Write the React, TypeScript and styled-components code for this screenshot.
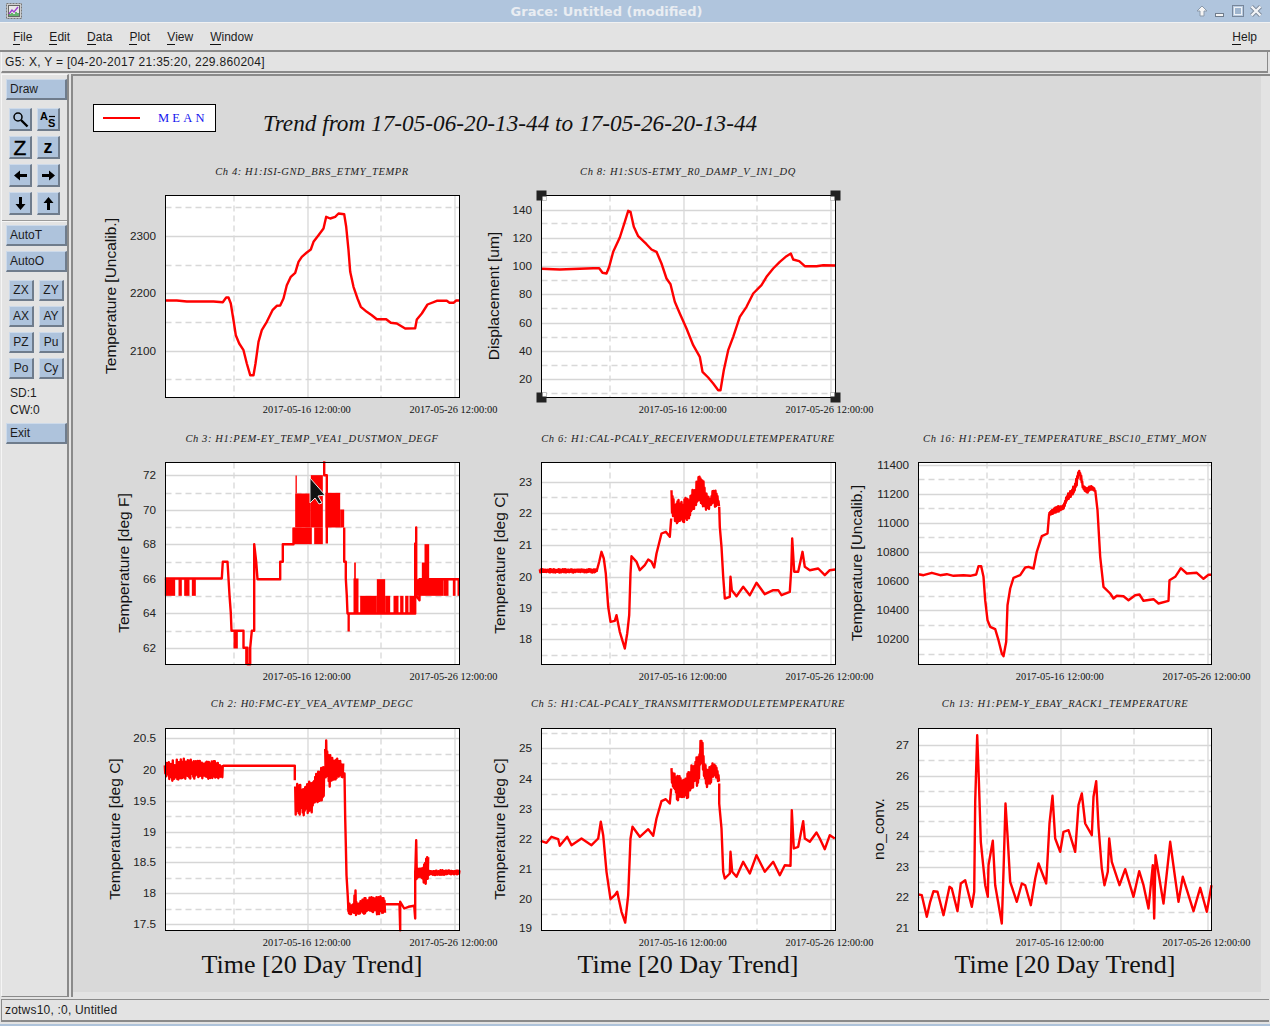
import React from 'react'
import styled, { createGlobalStyle } from 'styled-components'

const GlobalStyle = createGlobalStyle`
  html, body {
    margin: 0;
    padding: 0;
    background: #e3e3e3;
  }
`

// zoom coords = crop pixels * 3, that's how the traces were read off
type Pt = [number, number]

const parse = (s: string): Pt[] =>
  s
    .trim()
    .split(/\s+/)
    .map((p) => {
      const [x, y] = p.split(',')
      return [Number(x), Number(y)] as Pt
    })

const lerp = (pts: Pt[], x: number) => {
  if (x <= pts[0][0]) return pts[0][1]
  for (let i = 1; i < pts.length; i++) {
    if (x <= pts[i][0]) {
      const t = (x - pts[i - 1][0]) / (pts[i][0] - pts[i - 1][0])
      return pts[i - 1][1] + t * (pts[i][1] - pts[i - 1][1])
    }
  }
  return pts[pts.length - 1][1]
}

// noisy stretch: zigzag between an upper and a lower outline
const band = (upper: string, lower: string, seed = 7): Pt[] => {
  const up = parse(upper)
  const lo = parse(lower)
  const start = Math.min(up[0][0], lo[0][0])
  const end = Math.max(up[up.length - 1][0], lo[lo.length - 1][0])
  const out: Pt[] = []
  let r = seed
  let odd = false
  for (let x = start; x <= end; x += 1.5) {
    r = (r * 137 + 61) % 509
    const k = (r / 509) * 0.3
    const a = lerp(up, x)
    const b = lerp(lo, x)
    out.push([x, odd ? b - (b - a) * k : a + (b - a) * k])
    odd = !odd
  }
  return out
}

type GraphProps = {
  left: number
  top: number
  width?: number
  major: [number, string][]
  minor: number[]
  yLabel: string
  yLabelX: number
  lines: Pt[][]
  rects?: number[][]
  handles?: boolean
  cursor?: boolean
}

const graphs: Record<string, GraphProps> = {
  ch4: {
    left: 196,
    top: 106,
    major: [
      [229, '2300'],
      [400, '2200'],
      [574, '2100'],
    ],
    minor: [142, 316, 487, 658],
    yLabel: 'Temperature [Uncalib.]',
    yLabelX: -54,
    lines: [
      parse(
        '196,421 230,421 260,424 300,424 340,424 368,426 378,412 385,412 392,430 400,480 407,525 417,550 430,570 440,610 450,645 460,645 466,610 475,545 485,510 500,485 517,450 530,437 540,436 550,415 560,375 572,350 585,338 595,305 605,290 620,277 632,268 640,245 655,225 670,205 678,170 690,175 705,170 715,160 732,162 738,200 745,270 750,335 760,380 772,415 782,440 800,455 815,465 830,477 858,477 872,488 890,490 915,505 945,504 950,478 965,460 982,433 1010,422 1040,422 1048,428 1060,428 1068,421 1078,421'
      ),
    ],
  },
  ch8: {
    left: 185,
    top: 106,
    major: [
      [150, '140'],
      [236, '120'],
      [320, '100'],
      [404, '80'],
      [490, '60'],
      [574, '40'],
      [658, '20'],
    ],
    minor: [190, 278, 362, 446, 532, 616, 700],
    yLabel: 'Displacement [um]',
    yLabelX: -47,
    handles: true,
    lines: [
      parse(
        '185,326 220,327 240,328 300,326 340,324 358,324 368,338 380,340 388,320 400,275 420,232 435,185 445,152 452,155 462,200 475,228 500,252 515,268 530,275 545,310 560,355 572,372 585,425 600,460 620,505 640,555 660,590 668,635 685,652 700,670 715,690 722,690 732,630 745,570 760,530 780,470 800,440 820,400 845,375 860,350 880,325 900,305 920,288 933,280 940,298 958,303 975,318 1010,318 1030,315 1066,316'
      ),
    ],
  },
  ch3: {
    left: 196,
    top: 97,
    major: [
      [136, '72'],
      [241, '70'],
      [343, '68'],
      [447, '66'],
      [550, '64'],
      [655, '62'],
    ],
    minor: [190, 292, 397, 500, 604],
    yLabel: 'Temperature [deg F]',
    yLabelX: -41,
    cursor: true,
    lines: [
      parse(
        '194,445 365,445 368,395 382,395 385,445 388,495 392,548 394,602 430,602 430,653 442,653 442,702 450,702 450,653 455,602 462,602 462,342 468,395 472,447 540,447 540,395 548,395 548,342 580,342 580,292'
      ),
      parse('672,93 672,135 680,135 680,340'),
      parse(
        '732,292 732,395 737,395 737,445 740,497 742,550 945,550 945,340 948,340 948,292 948,497 958,510 958,447 1078,447'
      ),
    ],
    rects: [
      [194, 447, 225, 497],
      [235, 447, 245, 497],
      [252, 447, 268, 497],
      [275, 447, 287, 497],
      [400, 602, 413, 655],
      [435, 653, 443, 703],
      [580, 292, 635, 342],
      [585, 190, 632, 292],
      [586, 136, 590, 190],
      [632, 135, 668, 292],
      [642, 292, 668, 342],
      [676, 188, 720, 292],
      [720, 238, 732, 292],
      [742, 550, 749, 604],
      [760, 445, 775, 550],
      [762, 397, 767, 550],
      [780, 497, 830, 550],
      [830, 447, 855, 550],
      [855, 497, 870, 550],
      [880, 497, 895, 550],
      [900, 497, 910, 550],
      [915, 497, 925, 550],
      [928, 497, 946, 550],
      [950, 447, 1030, 497],
      [965, 397, 975, 447],
      [973, 342, 987, 447],
      [1030, 447, 1045, 497],
      [1058, 447, 1066, 497],
      [1072, 447, 1078, 497],
    ],
  },
  ch6: {
    left: 185,
    top: 97,
    major: [
      [157, '23'],
      [250, '22'],
      [347, '21'],
      [441, '20'],
      [536, '19'],
      [628, '18'],
    ],
    minor: [203, 298, 393, 487, 582, 676],
    yLabel: 'Temperature [deg C]',
    yLabelX: -41,
    lines: [
      band('180,417 350,417', '180,427 350,427', 11),
      parse(
        '350,425 358,395 365,365 372,385 378,430 385,530 392,575 405,572 410,555 420,605 435,655 442,610 448,555 452,430 455,378 470,395 480,420 495,405 505,388 515,395 523,412 530,370 545,310 558,305 570,320 574,265'
      ),
      band(
        '575,180 585,220 595,205 610,210 625,195 640,165 650,150 660,125 668,120 675,180 690,200 700,170 710,185 718,220',
        '575,260 590,280 610,282 625,282 635,250 650,240 660,215 675,245 690,235 700,230 718,230'
      ),
      parse(
        '718,230 720,290 725,350 730,440 735,505 750,500 752,440 756,480 770,498 790,470 810,495 830,458 855,492 880,480 895,480 905,495 930,485 934,420 937,325 943,425 955,425 968,365 975,410 990,420 1015,415 1035,435 1050,420 1066,418'
      ),
    ],
  },
  ch16: {
    left: 205,
    top: 97,
    width: 293,
    major: [
      [105, '11400'],
      [193, '11200'],
      [280, '11000'],
      [367, '10800'],
      [455, '10600'],
      [542, '10400'],
      [628, '10200'],
    ],
    minor: [149, 236, 323, 410, 499, 586, 673],
    yLabel: 'Temperature [Uncalib.]',
    yLabelX: -61,
    lines: [
      parse(
        '205,432 220,435 245,428 270,435 290,432 310,437 340,435 360,437 378,433 385,408 393,408 400,440 405,510 412,570 420,590 435,597 445,630 455,670 460,678 468,635 472,525 480,475 490,443 510,435 525,412 535,410 550,415 560,365 575,318 592,310 597,250'
      ),
      band(
        '597,245 620,228 640,225 650,195 672,165 680,140 686,118 692,130 698,165 710,175 722,165 735,178',
        '597,255 620,248 640,238 650,215 672,190 680,165 686,130 692,150 698,175 710,190 722,178 735,182',
        23
      ),
      parse(
        '735,180 742,240 750,380 760,470 780,490 790,505 800,497 820,498 835,510 855,495 868,493 880,512 910,507 925,520 955,512 958,450 975,440 985,425 992,414 1010,430 1040,428 1060,446 1075,434 1084,434'
      ),
    ],
  },
  ch2: {
    left: 196,
    top: 100,
    major: [
      [131, '20.5'],
      [226, '20'],
      [318, '19.5'],
      [412, '19'],
      [503, '18.5'],
      [595, '18'],
      [688, '17.5'],
    ],
    minor: [179, 271, 364, 457, 549, 643],
    yLabel: 'Temperature [deg C]',
    yLabelX: -50,
    lines: [
      band(
        '194,205 205,195 250,190 300,195 340,195 368,208',
        '194,245 215,258 250,252 300,250 340,252 368,254',
        5
      ),
      parse('368,212 584,212 584,255'),
      band(
        '585,255 610,275 640,240 660,212 672,210',
        '585,392 590,360 630,362 650,322 668,322',
        31
      ),
      band(
        '675,135 680,135 690,180 705,190 715,185 730,205',
        '675,260 690,276 700,255 730,250',
        17
      ),
      parse('730,235 733,235 735,370 737,445 739,540 743,605 745,650'),
      band(
        '745,625 762,620 765,555 768,620 800,605 830,605 855,600',
        '745,655 760,664 790,658 850,658 855,655',
        43
      ),
      parse('855,627 898,627 900,705 900,620 912,640 925,635 942,632 945,670 945,540 948,435 950,540'),
      band(
        '945,515 965,520 975,490 985,475',
        '945,555 965,548 975,578 985,545',
        3
      ),
      band('985,525 1078,525', '985,540 1078,538', 19),
    ],
  },
  ch5: {
    left: 185,
    top: 100,
    major: [
      [161, '25'],
      [253, '24'],
      [343, '23'],
      [433, '22'],
      [523, '21'],
      [613, '20'],
    ],
    minor: [115, 205, 298, 388, 478, 568, 658],
    yLabel: 'Temperature [deg C]',
    yLabelX: -41,
    lines: [
      parse(
        '183,437 200,443 215,425 235,432 240,452 262,425 275,450 305,430 335,450 355,430 363,380 370,420 380,530 392,612 405,600 412,590 425,650 436,682 445,600 452,430 458,395 480,425 505,402 520,422 530,370 545,318 558,312 570,325 574,280'
      ),
      band(
        '575,205 590,240 610,245 625,230 640,200 655,180 662,135 667,130 672,190 685,220 697,195 710,210 718,245',
        '575,280 595,320 625,315 635,280 655,270 665,205 680,285 700,250 718,265',
        13
      ),
      parse(
        '718,265 718,325 725,400 730,530 735,550 750,535 752,470 757,530 770,545 790,500 810,535 830,480 855,530 880,500 900,540 915,510 932,512 936,345 942,460 955,455 970,378 975,430 990,440 1010,412 1020,430 1035,462 1050,420 1065,430'
      ),
    ],
  },
  ch13: {
    left: 175,
    top: 100,
    width: 293,
    major: [
      [152, '27'],
      [244, '26'],
      [335, '25'],
      [425, '24'],
      [517, '23'],
      [608, '22'],
    ],
    minor: [196, 290, 380, 470, 562, 652],
    yLabel: 'no_conv.',
    yLabelX: -39,
    lines: [
      parse(
        '175,598 185,600 200,665 210,620 220,588 232,590 250,660 268,575 275,580 292,648 302,565 315,555 335,635 342,590 345,320 351,120 356,250 362,440 375,570 383,605 385,510 398,437 405,570 425,685 430,530 436,325 442,420 450,560 470,620 485,565 495,570 512,630 525,550 535,505 558,565 568,385 577,302 585,430 600,470 610,410 625,405 645,470 655,330 665,295 675,385 695,420 700,305 708,258 715,395 725,520 733,570 743,530 747,430 755,500 778,570 795,522 820,605 837,528 850,570 865,640 878,510 882,670 886,480 910,625 930,440 945,550 955,620 968,545 1000,648 1020,578 1040,650 1054,570'
      ),
    ],
  },
}

// tick labels that sit on the bottom edge of the axis
const extraTick: Record<string, [number, string]> = {
  ch5: [701, '19'],
  ch13: [699, '21'],
}

const PLOT_H = 202
const GRID_X = [68.5, 142.5, 215.5, 289.5]

const Window = styled.div`
  width: 1270px;
  height: 1026px;
  box-sizing: border-box;
  display: flex;
  flex-direction: column;
  background: #e3e3e3;
  border-bottom: 2px solid #aec3da;
  overflow: hidden;
  font-family: 'Liberation Sans', Arial, sans-serif;
  color: #1c1c1c;
`

const TitleBar = styled.div`
  height: 22px;
  flex: none;
  display: flex;
  align-items: center;
  padding: 0 7px 0 6px;
  background: #b0c5dd;
  border-bottom: 1px solid #f2f2f2;
`

const TitleText = styled.div`
  flex: 1;
  text-align: center;
  padding-right: 4px;
  color: #e9edf2;
  font: bold 13px 'DejaVu Sans', sans-serif;
`

const WinButtons = styled.div`
  display: flex;
  gap: 4px;
`

const MenuBar = styled.div`
  height: 25px;
  flex: none;
  display: flex;
  align-items: center;
  padding: 2px 13px 0;
  gap: 17px;
  font-size: 12px;
  border-bottom: 2px solid #8a8a8a;
`

const MenuItem = styled.span<{ $end?: boolean }>`
  margin-left: ${(p) => (p.$end ? 'auto' : '0')};
`

const Mnemonic = styled.span`
  display: inline-block;
  line-height: 14px;
  border-bottom: 1px solid #111;
`

const CoordBar = styled.div`
  height: 18px;
  flex: none;
  margin: 0 2px 0 1px;
  padding: 1px 0 0 3px;
  display: flex;
  align-items: center;
  font-size: 12px;
  letter-spacing: 0.3px;
  border-left: 1px solid #f5f5f5;
  border-right: 1px solid #8a8a8a;
  border-bottom: 2px solid #8a8a8a;
`

const Main = styled.div`
  flex: 1;
  min-height: 0;
  display: flex;
  margin-top: 1px;
`

const Sidebar = styled.div`
  width: 68px;
  flex: none;
  margin-left: 1px;
  box-sizing: border-box;
  padding: 4px 2px 0 4px;
  border-top: 1px solid #f5f5f5;
  border-left: 1px solid #f5f5f5;
  border-right: 2px solid #8a8a8a;
  border-bottom: 1px solid #8a8a8a;
  display: flex;
  flex-direction: column;
  font-size: 12px;
`

const bevel = `
  box-sizing: border-box;
  display: flex;
  align-items: center;
  background: #aec3dc;
  color: #1c1c1c;
  border-top: 1px solid #cddaea;
  border-left: 1px solid #cddaea;
  border-bottom: 2px solid #6f7c8c;
  border-right: 2px solid #6f7c8c;
`

const WideButton = styled.div<{ $top: number }>`
  ${bevel}
  width: 61px;
  height: 21px;
  padding-left: 3px;
  margin-top: ${(p) => p.$top}px;
`

const IconGrid = styled.div`
  display: grid;
  grid-template-columns: 23px 23px;
  grid-auto-rows: 23px;
  gap: 5px;
  margin: 8px 0 0 3px;
`

const IconButton = styled.div`
  ${bevel}
  justify-content: center;
  color: #000;
`

const BigZ = styled.span`
  font-size: 21px;
  line-height: 21px;
  -webkit-text-stroke: 0.4px #000;
`

const SmallZ = styled.span`
  font-size: 18px;
  line-height: 18px;
  font-weight: bold;
`

const TextGrid = styled.div`
  display: grid;
  grid-template-columns: 25px 25px;
  grid-auto-rows: 21px;
  gap: 5px;
  margin: 8px 0 0 3px;
`

const TextButton = styled.div`
  ${bevel}
  justify-content: center;
`

const Separator = styled.div`
  height: 1px;
  margin: 5px -2px 0 -4px;
  background: #9b9b9b;
  border-bottom: 1px solid #f5f5f5;
`

const StatText = styled.div<{ $top: number }>`
  height: 17px;
  line-height: 17px;
  margin: ${(p) => p.$top}px 0 0 4px;
`

const CanvasWrap = styled.div`
  flex: 1;
  min-width: 0;
  margin-left: 2px;
  border-top: 2px solid #8a8a8a;
  border-left: 2px solid #8a8a8a;
  padding: 0 9px 5px 0;
  display: flex;
`

const Canvas = styled.div`
  flex: 1;
  background: #d9d9d9;
  padding: 28px 0 0 20px;
`

const CanvasHead = styled.div`
  height: 57px;
  display: flex;
  align-items: flex-start;
`

const Legend = styled.div`
  width: 123px;
  height: 28px;
  box-sizing: border-box;
  background: #fff;
  border: 1px solid #000;
  display: flex;
  align-items: center;
  padding-left: 9px;
`

const LegendLine = styled.div`
  width: 37px;
  height: 2px;
  background: #f00;
`

const LegendText = styled.span`
  margin-left: 18px;
  color: #1414ee;
  font: 12.5px 'Liberation Serif', serif;
  letter-spacing: 3.2px;
`

const MainTitle = styled.div`
  margin: 6px 0 0 47px;
  font: italic 23.25px 'Liberation Serif', serif;
  color: #111;
  white-space: nowrap;
`

const GraphGrid = styled.div`
  display: grid;
  grid-template-columns: 376px 377px 376px;
  grid-template-rows: 267px 266px auto;
`

const GraphCell = styled.div`
  display: flex;
  flex-direction: column;
`

const GraphTitle = styled.div<{ $lift?: boolean }>`
  height: 34px;
  width: 294px;
  margin-left: 72px;
  display: flex;
  justify-content: center;
  padding-top: ${(p) => (p.$lift ? 3 : 4)}px;
  box-sizing: border-box;
  font: italic 10.5px/13px 'Liberation Serif', serif;
  letter-spacing: 0.6px;
  color: #222;
  white-space: nowrap;
`

const PlotSvg = styled.svg`
  display: block;
  overflow: visible;
`

const YTick = styled.text`
  font: 11.7px 'Liberation Sans', sans-serif;
  fill: #222;
  text-anchor: end;
`

const XTick = styled.text`
  font: 10.4px 'Liberation Serif', serif;
  fill: #111;
  text-anchor: middle;
`

const YLabel = styled.text`
  font: 15.5px 'Liberation Sans', sans-serif;
  fill: #111;
  text-anchor: middle;
`

const XAxisTitle = styled.div`
  width: 294px;
  margin-left: 72px;
  display: flex;
  justify-content: center;
  font: 26px/30px 'Liberation Serif', serif;
  color: #111;
  white-space: nowrap;
`

const StatusBar = styled.div`
  height: 20px;
  flex: none;
  margin: 2px 1px 2px 1px;
  padding-left: 3px;
  display: flex;
  align-items: center;
  font-size: 12px;
  letter-spacing: 0.2px;
  border-top: 1px solid #8a8a8a;
  border-bottom: 2px solid #8a8a8a;
  border-left: 1px solid #8a8a8a;
`

const Handle = ({ x, y, ix, iy }: { x: number; y: number; ix: number; iy: number }) => (
  <g>
    <rect x={x - 5} y={y - 5} width={10} height={10} fill="#222" />
    <rect x={x + ix} y={y + iy} width={4} height={4} fill="#fff" />
  </g>
)

const Graph = ({ id }: { id: string }) => {
  const g = graphs[id]
  const W = g.width ?? 294
  const lx = (z: number) => 72.5 + (z - g.left) / 3
  const ly = (z: number) => 0.5 + (z - g.top) / 3
  const snap = (z: number) => Math.round(ly(z) - 0.5) + 0.5
  const ticks = [...g.major]
  if (extraTick[id]) ticks.push(extraTick[id])
  return (
    <PlotSvg width={376} height={222} viewBox="0 0 376 222">
      <rect x={72.5} y={0.5} width={W} height={PLOT_H} fill="#fff" />
      {g.minor.map((y) => (
        <line
          key={y}
          x1={72.5}
          x2={72.5 + W}
          y1={snap(y)}
          y2={snap(y)}
          stroke="#d8d8d8"
          strokeWidth={1.3}
          strokeDasharray="6 4"
        />
      ))}
      {g.major.map(([y]) => (
        <line key={y} x1={72.5} x2={72.5 + W} y1={snap(y)} y2={snap(y)} stroke="#d6d6d6" strokeWidth={1.3} />
      ))}
      {GRID_X.map((x, i) => (
        <line
          key={x}
          x1={72.5 + x}
          x2={72.5 + x}
          y1={0.5}
          y2={0.5 + PLOT_H}
          stroke="#d8d8d8"
          strokeWidth={1.3}
          strokeDasharray={i % 2 === 0 ? '6 4' : undefined}
        />
      ))}
      {g.rects?.map((r, i) => (
        <rect key={i} x={lx(r[0])} y={ly(r[1])} width={(r[2] - r[0]) / 3} height={(r[3] - r[1]) / 3} fill="#f00" />
      ))}
      {g.lines.map((pts, i) => (
        <polyline
          key={i}
          points={pts.map(([x, y]) => `${lx(x).toFixed(1)},${ly(y).toFixed(1)}`).join(' ')}
          fill="none"
          stroke="#f00"
          strokeWidth={2.4}
          strokeLinejoin="round"
        />
      ))}
      <rect x={72.5} y={0.5} width={W} height={PLOT_H} fill="none" stroke="#000" />
      {ticks.map(([y, label]) => (
        <YTick key={label} x={63} y={ly(y) + 3.4}>
          {label}
        </YTick>
      ))}
      <XTick x={72.5 + 141.3} y={218}>
        2017-05-16 12:00:00
      </XTick>
      <XTick x={72.5 + 288} y={218}>
        2017-05-26 12:00:00
      </XTick>
      <YLabel transform={`translate(${72.5 + g.yLabelX + 4}, 101) rotate(-90)`}>{g.yLabel}</YLabel>
      {g.handles && (
        <>
          <Handle x={72.5} y={0.5} ix={1} iy={1} />
          <Handle x={72.5 + W} y={0.5} ix={-5} iy={1} />
          <Handle x={72.5} y={0.5 + PLOT_H} ix={1} iy={-5} />
          <Handle x={72.5 + W} y={0.5 + PLOT_H} ix={-5} iy={-5} />
        </>
      )}
      {g.cursor && (
        <path
          d="M 217 16 L 217 41 L 222 36 L 226 42 L 229 41 L 225 34 L 232 33 Z"
          fill="#111"
          stroke="#e8e8e8"
          strokeWidth={1}
        />
      )}
    </PlotSvg>
  )
}

const titles: { id?: string; title?: string; axis?: boolean }[] = [
  { id: 'ch4', title: 'Ch 4: H1:ISI-GND_BRS_ETMY_TEMPR' },
  { id: 'ch8', title: 'Ch 8: H1:SUS-ETMY_R0_DAMP_V_IN1_DQ' },
  {},
  { id: 'ch3', title: 'Ch 3: H1:PEM-EY_TEMP_VEA1_DUSTMON_DEGF' },
  { id: 'ch6', title: 'Ch 6: H1:CAL-PCALY_RECEIVERMODULETEMPERATURE' },
  { id: 'ch16', title: 'Ch 16: H1:PEM-EY_TEMPERATURE_BSC10_ETMY_MON' },
  { id: 'ch2', title: 'Ch 2: H0:FMC-EY_VEA_AVTEMP_DEGC', axis: true },
  { id: 'ch5', title: 'Ch 5: H1:CAL-PCALY_TRANSMITTERMODULETEMPERATURE', axis: true },
  { id: 'ch13', title: 'Ch 13: H1:PEM-Y_EBAY_RACK1_TEMPERATURE', axis: true },
]

const AppIcon = () => (
  <svg width="16" height="16" viewBox="0 0 16 16">
    <rect x="0.5" y="0.5" width="15" height="15" fill="#cfcfcf" stroke="#777" strokeDasharray="2 1" />
    <rect x="2.5" y="2.5" width="11" height="11" fill="#e8e8e8" stroke="#666" />
    <path d="M3 11 L6 7 L8 9 L12 4" fill="none" stroke="#a040d0" strokeWidth="1.4" />
    <path d="M4 13 V11 M6 13 V10 M8 13 V11 M10 13 V9 M12 13 V10" stroke="#2f9e3a" strokeWidth="1.4" />
  </svg>
)

const WinIcon = ({ kind }: { kind: 'up' | 'min' | 'max' | 'close' }) => (
  <svg width="14" height="14" viewBox="0 0 14 14">
    {kind === 'up' && <path d="M7 2 L12 7 H9 V12 H5 V7 H2 Z" fill="#f4f4f4" stroke="#8b9aab" />}
    {kind === 'min' && <rect x="2.5" y="9.5" width="8" height="3" fill="#f4f4f4" stroke="#6f7c8c" />}
    {kind === 'max' && (
      <>
        <rect x="1.5" y="1.5" width="11" height="11" fill="#b9cbe0" stroke="#77869a" />
        <rect x="3.5" y="3.5" width="7" height="7" fill="#9fb5ce" stroke="#eef1f5" />
      </>
    )}
    {kind === 'close' && (
      <>
        <path d="M2.5 2.5 L11.5 11.5 M11.5 2.5 L2.5 11.5" stroke="#7d8b9c" strokeWidth="4.2" />
        <path d="M2.5 2.5 L11.5 11.5 M11.5 2.5 L2.5 11.5" stroke="#f2f4f7" strokeWidth="2.4" />
      </>
    )}
  </svg>
)

const ArrowIcon = ({ rotate }: { rotate: number }) => (
  <svg width="15" height="15" viewBox="0 0 15 15">
    <path d="M1 7.5 L7 2.5 V6 H14 V9 H7 V12.5 Z" fill="#000" transform={`rotate(${rotate} 7.5 7.5)`} />
  </svg>
)

const SearchIcon = () => (
  <svg width="17" height="17" viewBox="0 0 17 17">
    <circle cx="6" cy="6" r="4" fill="none" stroke="#000" strokeWidth="1.5" />
    <path d="M9 9 L15.5 15.5" stroke="#000" strokeWidth="2.4" />
  </svg>
)

const TextIcon = () => (
  <svg width="19" height="19" viewBox="0 0 19 19">
    <text x="1" y="10" fontFamily="Liberation Sans" fontWeight="bold" fontSize="11" fill="#000">
      A
    </text>
    <text x="9" y="17" fontFamily="Liberation Sans" fontWeight="bold" fontSize="11" fill="#000">
      S
    </text>
    <path d="M10 6.5 H16" stroke="#000" strokeWidth="1.2" />
  </svg>
)

const Menu = ({ first, rest, end }: { first: string; rest: string; end?: boolean }) => (
  <MenuItem $end={end}>
    <Mnemonic>{first}</Mnemonic>
    {rest}
  </MenuItem>
)

export default function App() {
  return (
    <Window>
      <GlobalStyle />
      <TitleBar>
        <AppIcon />
        <TitleText>Grace: Untitled (modified)</TitleText>
        <WinButtons>
          <WinIcon kind="up" />
          <WinIcon kind="min" />
          <WinIcon kind="max" />
          <WinIcon kind="close" />
        </WinButtons>
      </TitleBar>
      <MenuBar>
        <Menu first="F" rest="ile" />
        <Menu first="E" rest="dit" />
        <Menu first="D" rest="ata" />
        <Menu first="P" rest="lot" />
        <Menu first="V" rest="iew" />
        <Menu first="W" rest="indow" />
        <Menu first="H" rest="elp" end />
      </MenuBar>
      <CoordBar>G5: X, Y = [04-20-2017 21:35:20, 229.860204]</CoordBar>
      <Main>
        <Sidebar>
          <WideButton $top={0}>Draw</WideButton>
          <IconGrid>
            <IconButton>
              <SearchIcon />
            </IconButton>
            <IconButton>
              <TextIcon />
            </IconButton>
            <IconButton>
              <BigZ>Z</BigZ>
            </IconButton>
            <IconButton>
              <SmallZ>z</SmallZ>
            </IconButton>
            <IconButton>
              <ArrowIcon rotate={0} />
            </IconButton>
            <IconButton>
              <ArrowIcon rotate={180} />
            </IconButton>
            <IconButton>
              <ArrowIcon rotate={-90} />
            </IconButton>
            <IconButton>
              <ArrowIcon rotate={90} />
            </IconButton>
          </IconGrid>
          <Separator />
          <WideButton $top={3}>AutoT</WideButton>
          <WideButton $top={5}>AutoO</WideButton>
          <TextGrid>
            {['ZX', 'ZY', 'AX', 'AY', 'PZ', 'Pu', 'Po', 'Cy'].map((t) => (
              <TextButton key={t}>{t}</TextButton>
            ))}
          </TextGrid>
          <StatText $top={6}>SD:1</StatText>
          <StatText $top={0}>CW:0</StatText>
          <WideButton $top={4}>Exit</WideButton>
        </Sidebar>
        <CanvasWrap>
          <Canvas>
            <CanvasHead>
              <Legend>
                <LegendLine />
                <LegendText>MEAN</LegendText>
              </Legend>
              <MainTitle>Trend from 17-05-06-20-13-44 to 17-05-26-20-13-44</MainTitle>
            </CanvasHead>
            <GraphGrid>
              {titles.map((t, i) => (
                <GraphCell key={i}>
                  {t.id && (
                    <>
                      <GraphTitle $lift={t.axis}>{t.title}</GraphTitle>
                      <Graph id={t.id} />
                      {t.axis && <XAxisTitle>Time [20 Day Trend]</XAxisTitle>}
                    </>
                  )}
                </GraphCell>
              ))}
            </GraphGrid>
          </Canvas>
        </CanvasWrap>
      </Main>
      <StatusBar>zotws10, :0, Untitled</StatusBar>
    </Window>
  )
}
